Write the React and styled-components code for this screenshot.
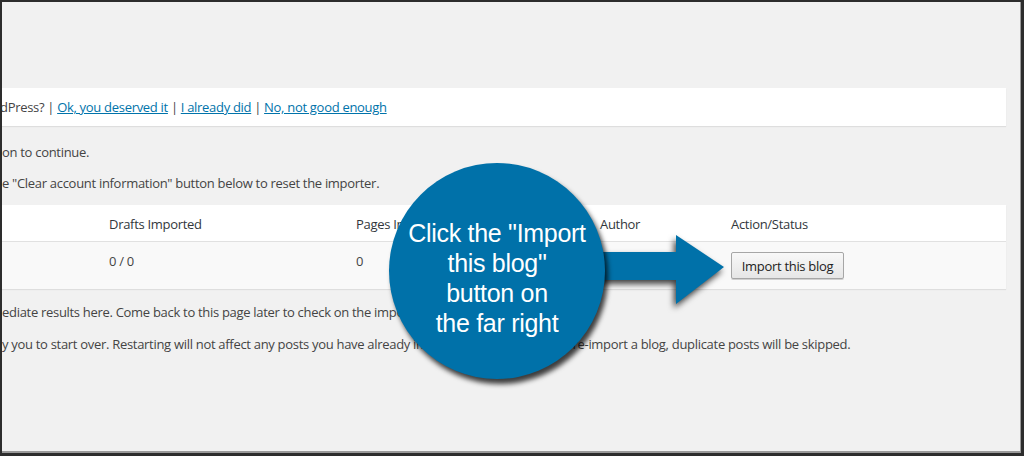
import React from "react";
import styled, { createGlobalStyle } from "styled-components";

const GlobalStyle = createGlobalStyle`
    html, body {
        margin: 0;
        padding: 0;
        overflow: hidden;
        background: #2d2d2d;
    }
`;

const colors = {
    bg: "#f1f1f1",
    text: "#444",
    heading: "#32373c",
    link: "#0073aa",
    callout: "#0071a9",
};

const Frame = styled.div`
    position: relative;
    width: 1024px;
    height: 456px;
    box-sizing: border-box;
    border-top: 2px solid #2d2d2d;
    border-left: 2px solid #2d2d2d;
    border-right: 3px solid #2d2d2d;
    border-bottom: 3px solid #2d2d2d;
    box-shadow: inset -1px -2px 0 #9a9a9a;
    background: ${colors.bg};
    overflow: hidden;
    font-family: "Open Sans", "Noto Sans", sans-serif;
    font-size: 13px;
    letter-spacing: -0.3px;
    color: ${colors.text};
`;

const Content = styled.div`
    display: flex;
    flex-direction: column;
    padding: 86px 15px 0 0;
`;

const Notice = styled.div`
    height: 38px;
    background: #fff;
    box-shadow: 0 1px 1px rgba(0, 0, 0, 0.08);
    display: flex;
    align-items: center;
    gap: 2px;
    white-space: nowrap;
`;

const NoticeText = styled.span`
    margin-left: -2px;
`;

const Link = styled.a`
    color: ${colors.link};
    text-decoration: underline;
`;

const Sep = styled.span`
    color: ${colors.text};
    padding: 0 1px;
`;

const Para = styled.p`
    margin: ${(props) => props.$top || 0}px 0 0;
    line-height: 20px;
    white-space: nowrap;
`;

const Table = styled.div`
    margin-top: 12px;
    background: #fff;
    box-shadow: 0 1px 1px rgba(0, 0, 0, 0.08);
`;

const Row = styled.div`
    display: grid;
    grid-template-columns: 107px 247px 244px 131px 1fr;
    align-items: ${(props) => (props.$head ? "center" : "start")};
    box-sizing: border-box;
    padding-top: ${(props) => (props.$head ? 1 : 9)}px;
    line-height: 20px;
    height: ${(props) => props.$height}px;
    background: ${(props) => (props.$alt ? "#f9f9f9" : "#fff")};
    border-bottom: ${(props) => (props.$head ? "1px solid #e1e1e1" : "none")};
    color: ${(props) => (props.$head ? colors.heading : colors.text)};
`;

const Cell = styled.div`
    white-space: nowrap;
`;

const Button = styled.button`
    font-family: "Open Sans", "Noto Sans", sans-serif;
    font-size: 13px;
    letter-spacing: -0.3px;
    color: #222;
    height: 27px;
    width: 113px;
    margin-top: 1px;
    padding: 0;
    border: 1px solid #a6a6a6;
    border-radius: 2px;
    background: linear-gradient(#f8f8f8, #e6e6e6);
    box-shadow: 0 1px 0 #d0d0d0;
`;

const Bubble = styled.div`
    position: absolute;
    left: 387px;
    top: 161px;
    width: 216px;
    height: 216px;
    border-radius: 50%;
    background: ${colors.callout};
    box-shadow: 3px 5px 5px rgba(0, 0, 0, 0.75);
    box-sizing: border-box;
    padding-top: 55px;
    text-align: center;
    color: #fff;
    font-family: "Liberation Sans", Arial, sans-serif;
    font-size: 25px;
    line-height: 30px;
    z-index: 2;
`;

const Arrow = styled.svg`
    position: absolute;
    left: 562px;
    top: 222px;
    width: 180px;
    height: 100px;
    overflow: visible;
    filter: drop-shadow(-2px 4px 3px rgba(0, 0, 0, 0.75));
    z-index: 1;
`;

export default function App() {
    return (
        <>
            <GlobalStyle />
            <Frame>
                <Content>
                    <Notice>
                        <NoticeText>dPress?</NoticeText>
                        <Sep>|</Sep>
                        <Link href="#">Ok, you deserved it</Link>
                        <Sep>|</Sep>
                        <Link href="#">I already did</Link>
                        <Sep>|</Sep>
                        <Link href="#">No, not good enough</Link>
                    </Notice>
                    <Para $top={16}>on to continue.</Para>
                    <Para $top={11}>
                        e "Clear account information" button below to reset the importer.
                    </Para>
                    <Table>
                        <Row $head $height={37}>
                            <Cell />
                            <Cell>Drafts Imported</Cell>
                            <Cell>Pages Imported</Cell>
                            <Cell>Author</Cell>
                            <Cell>Action/Status</Cell>
                        </Row>
                        <Row $alt $height={47}>
                            <Cell />
                            <Cell>0 / 0</Cell>
                            <Cell>0</Cell>
                            <Cell />
                            <Cell>
                                <Button>Import this blog</Button>
                            </Cell>
                        </Row>
                    </Table>
                    <Para $top={13}>
                        ediate results here. Come back to this page later to check on the import progress.
                    </Para>
                    <Para $top={12}>
                        y you to start over. Restarting will not affect any posts you have already imported. If you attempt to re-import a blog, duplicate posts will be skipped.
                    </Para>
                </Content>
                <Arrow viewBox="0 0 180 100">
                    <polygon
                        fill={colors.callout}
                        points="0,28 112,28 112,11 160,43 112,80 112,56 0,56"
                    />
                </Arrow>
                <Bubble>
                    Click the "Import
                    <br />
                    this blog"
                    <br />
                    button on
                    <br />
                    the far right
                </Bubble>
            </Frame>
        </>
    );
}
